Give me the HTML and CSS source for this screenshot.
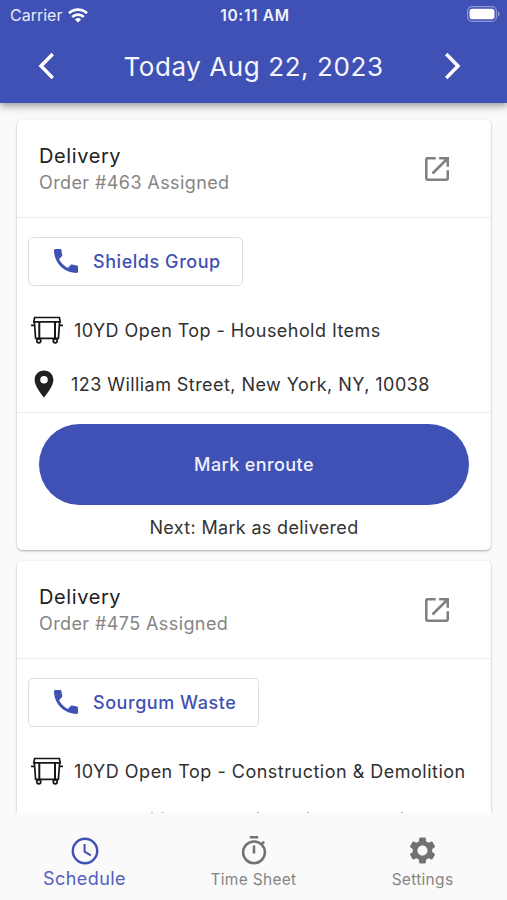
FILE: index.html
```html
<!DOCTYPE html>
<html lang="en">
<head>
<meta charset="utf-8">
<title>Schedule</title>
<link rel="stylesheet" href="styles.css">
</head>
<body>
<svg class="defs" aria-hidden="true">
  <symbol id="open" viewBox="0 0 24 24"><path d="M3.8 3H11v1.9H4.900v14.200h14.200V13H21v6.200A1.800 1.800 0 0 1 19.200 21H4.800A1.800 1.800 0 0 1 3 19.200V4.800A1.800 1.800 0 0 1 4.800 3zM13.600 3H21v7.400h-1.900V6.300l-9.800 9.800L7.900 14.700l9.800-9.800h-4.100z"/></symbol>
  <symbol id="phone" viewBox="0 0 24 24"><path d="M4.200 3h3.300c.6 0 1 .4 1.100 1 .1 1.200.3 2.300.6 3.400.1.400 0 .8-.3 1.100L6.800 10.700c1.500 2.800 3.700 5 6.500 6.500l2.200-2.200c.3-.3.700-.4 1.100-.3 1.100.4 2.200.6 3.400.7.600 0 1 .5 1 1.100v3.400c0 .6-.5 1.100-1.100 1.100C10.500 20.800 3.200 13.500 3 4.200 3 3.500 3.500 3 4.200 3z"/></symbol>
  <symbol id="bin" viewBox="0 0 32 28"><g fill="none" stroke="currentColor" stroke-width="1.700"><path d="M3.600 1.500h24.800l.8 4.300H2.800zM3.400 6l1.200 16.300h22.800L28.600 6M0 9.300h4M28 9.300h4"/><path d="M8.300 6v16M24 6v16" stroke-width="2"/><circle cx="7.800" cy="24.800" r="2"/><circle cx="24.200" cy="24.800" r="2"/></g></symbol>
</svg>
<div class="phone">
  <header class="top">
    <div class="status">
      <span class="carrier"><span class="t-carrier">Carrier</span>
        <svg class="wifi" viewBox="0 0 20 15"><g fill="none" stroke="currentColor" stroke-width="2.700"><path d="M1 5.300a13 13 0 0 1 18 0M4.200 9a8.500 8.500 0 0 1 11.600 0"/></g><path d="M10 14.600l-3.100-3.100a4.500 4.500 0 0 1 6.200 0z" fill="currentColor"/></svg>
      </span>
      <span class="clock">10:11 AM</span>
      <span class="batt"><svg viewBox="0 0 33 16"><rect x=".6" y=".6" width="28.800" height="14.800" rx="4.500" fill="none" stroke="#8f99d6" stroke-width="1.100"/><rect x="2.500" y="2.700" width="25" height="10.600" rx="2.800" fill="#fff"/><path d="M31 5.500v5q1.600-.8 1.600-2.500T31 5.500z" fill="#8f99d6"/></svg></span>
    </div>
    <div class="datebar">
      <svg class="chev" viewBox="0 0 16 28"><path d="M14.800 2L3 14l11.800 12"/></svg>
      <h1>Today Aug 22, 2023</h1>
      <svg class="chev" viewBox="0 0 16 28"><path d="M1.200 2L13 14 1.200 26"/></svg>
    </div>
  </header>
  <main class="list">
    <section class="card">
      <div class="head">
        <div><h2>Delivery</h2><p class="order">Order #463 Assigned</p></div>
        <svg class="open"><use href="#open"/></svg>
      </div>
      <div class="body">
        <button class="call"><svg class="ph"><use href="#phone"/></svg><span>Shields Group</span></button>
        <div class="row item"><svg class="bin"><use href="#bin"/></svg><span class="t-item">10YD Open Top - Household Items</span></div>
        <div class="row addr"><svg class="pin" viewBox="0 0 20 28"><path fill-rule="evenodd" d="M10 .5C4.700.5.600 4.600.600 9.800.600 16.700 10 27.500 10 27.500s9.400-10.800 9.400-17.700C19.400 4.600 15.300.5 10 .5zm0 5.500a3.800 3.800 0 1 1 0 7.600 3.800 3.800 0 0 1 0-7.600z"/></svg><span class="t-addr">123 William Street, New York, NY, 10038</span></div>
      </div>
      <div class="foot">
        <button class="mark"><span>Mark enroute</span></button>
        <p class="next"><span>Next: Mark as delivered</span></p>
      </div>
    </section>
    <section class="card">
      <div class="head">
        <div><h2>Delivery</h2><p class="order">Order #475 Assigned</p></div>
        <svg class="open"><use href="#open"/></svg>
      </div>
      <div class="body">
        <button class="call waste"><svg class="ph"><use href="#phone"/></svg><span>Sourgum Waste</span></button>
        <div class="row item"><svg class="bin"><use href="#bin"/></svg><span class="t-item demo">10YD Open Top - Construction &amp; Demolition</span></div>
        <svg class="edge" viewBox="0 0 474 2"><path d="M134 0h2v2h-2zM144.500 0h2v2h-2zM240 0h2v2h-2zM290 0h2v2h-2zM384 0h2v2h-2z"/></svg>
      </div>
    </section>
  </main>
  <nav class="tabs">
    <a class="tab on"><svg viewBox="0 0 28 28"><g fill="none" stroke="currentColor" stroke-width="2.400"><circle cx="14" cy="14" r="12.200"/><path d="M13.600 7v7.700l6.200 3.700" stroke-width="2"/></g></svg><span>Schedule</span></a>
    <a class="tab mid"><svg viewBox="0 0 28 30"><g fill="none" stroke="currentColor" stroke-width="2.500"><circle cx="14" cy="17.300" r="10.900"/><path d="M9.800 2.200h8.400M14 10.500v8M21.400 9.400l2.700-2.700"/></g></svg><span>Time Sheet</span></a>
    <a class="tab set"><svg viewBox="0 0 24 24"><path fill="currentColor" d="M19.430 12.980c.04-.32.07-.64.07-.98s-.03-.66-.07-.98l2.110-1.650c.19-.15.24-.42.120-.64l-2-3.460c-.12-.22-.39-.3-.61-.22l-2.490 1c-.52-.4-1.080-.73-1.690-.98l-.38-2.650C14.460 2.180 14.250 2 14 2h-4c-.25 0-.46.180-.49.420l-.38 2.650c-.61.25-1.170.59-1.690.98l-2.490-1c-.23-.09-.49 0-.61.220l-2 3.460c-.13.220-.07.490.12.640l2.110 1.650c-.04.320-.07.650-.07.980s.03.660.07.980l-2.110 1.650c-.19.150-.24.420-.12.640l2 3.460c.12.220.39.300.61.220l2.490-1c.52.400 1.080.730 1.690.980l.38 2.650c.03.240.24.420.49.420h4c.25 0 .46-.18.490-.42l.38-2.650c.61-.25 1.170-.59 1.690-.98l2.490 1c.23.090.49 0 .61-.22l2-3.460c.12-.22.07-.49-.12-.64l-2.110-1.650zM12 15.900c-2.150 0-3.900-1.750-3.900-3.900s1.750-3.900 3.900-3.900 3.900 1.750 3.900 3.900-1.750 3.900-3.900 3.900z"/></svg><span>Settings</span></a>
  </nav>
</div>
</body>
</html>
```
FILE: styles.css
```css
* { box-sizing: border-box; margin: 0; padding: 0; }
body { font-family: Inter, "Liberation Sans", sans-serif; background: #fafafa; color: #333; }
.defs { display: none; }
svg { display: block; flex: none; }
span, h1, h2, p { white-space: nowrap; }
button { font-family: inherit; border: 0; background: none; }
.phone { width: 507px; height: 900px; display: flex; flex-direction: column; overflow: hidden; }

.top { height: 103px; flex: none; background: #3f51b5; color: #fff; z-index: 1; box-shadow: 0 3px 6px rgba(0,0,0,.28), 0 5px 10px rgba(0,0,0,.1); }
.status { height: 30px; display: grid; grid-template-columns: 1fr auto 1fr; align-items: center; padding: 0 7px 0 10px; }
.carrier { display: flex; align-items: center; gap: 6px; color: #e8eaf8; font-size: 16px; }
.wifi { width: 20px; height: 15px; color: #fff; }
.clock { font-size: 15.500px; font-weight: 600; letter-spacing: .65px; color: #f2f3fc; }
.batt { justify-self: end; margin-top: -2px; }
.batt svg { width: 33px; height: 16px; }
.datebar { height: 72px; display: flex; align-items: center; justify-content: space-between; padding: 0 46px 0 38px; }
.chev { width: 16px; height: 28px; }
.chev path { fill: none; stroke: #fff; stroke-width: 3.500; }
h1 { font-size: 26px; font-weight: 400; letter-spacing: .58px; color: #f5f6fd; margin-left: 8px; }

.list { flex: 1; min-height: 0; overflow: hidden; padding: 17px 16px 0 17px; display: flex; flex-direction: column; gap: 11px; }
.card { flex: none; height: 430px; background: #fff; border-radius: 5px; box-shadow: 0 1px 2px rgba(0,0,0,.22), 0 1px 3px rgba(0,0,0,.12); }
.head { height: 98px; border-bottom: 1px solid #ececec; display: flex; justify-content: space-between; align-items: center; padding: 0 38px 0 22px; }
h2 { font-size: 20px; line-height: 28px; font-weight: 400; letter-spacing: .6px; color: #222; }
.order { font-size: 18px; line-height: 26px; letter-spacing: .4px; color: #858585; }
.open { width: 32px; height: 32px; fill: #808080; }
.body { height: 195px; border-bottom: 1px solid #ececec; padding: 19px 11px 0; }
.call { display: flex; align-items: center; width: 215px; height: 49px; border: 1px solid #dedede; border-radius: 5px; padding: 0 0 1px 21px; gap: 11px; color: #3f51b5; font-size: 18px; font-weight: 500; letter-spacing: .55px; }
.call.waste { width: 231px; }
.ph { width: 32px; height: 32px; fill: #3f51b5; }
.row { display: flex; align-items: center; font-size: 18px; letter-spacing: .44px; color: #303030; }
.item { height: 54px; margin-top: 17px; padding-left: 3px; gap: 11px; }
.demo { letter-spacing: .5px; }
.bin { width: 32px; height: 28px; color: #161616; }
.addr { height: 54px; padding-left: 6px; gap: 17px; }
.pin { width: 20px; height: 28px; fill: #202020; }
.foot { padding: 11px 22px 0; text-align: center; }
.mark { display: block; width: 430px; height: 81px; border-radius: 41px; background: #3f51b5; color: #f0f1fb; font-size: 18px; font-weight: 500; letter-spacing: .4px; }
.next { font-size: 18px; line-height: 46px; letter-spacing: .33px; }
.edge { width: 474px; height: 2px; margin: 14px 0 0 -11px; fill: #bbb; }

.tabs { flex: none; height: 87px; background: #fafafa; display: grid; grid-template-columns: repeat(3, 1fr); }
.tab { display: flex; flex-direction: column; align-items: center; color: #727272; font-size: 15.500px; letter-spacing: .3px; padding-top: 24px; }
.tab svg { width: 28px; height: 28px; }
.tab span { line-height: 26px; margin-top: 2px; color: #858585; }
.tab.on { color: #3f51b5; font-size: 18px; letter-spacing: .45px; }
.tab.on span { color: #5260bd; margin-top: 1px; }
.tab.mid { padding-top: 22px; }
.tab.mid svg { height: 30px; }
.tab.set svg { width: 31px; height: 31px; }
.tab.set { padding-top: 22px; }
.tab.set span { margin-top: 1px; }
```
